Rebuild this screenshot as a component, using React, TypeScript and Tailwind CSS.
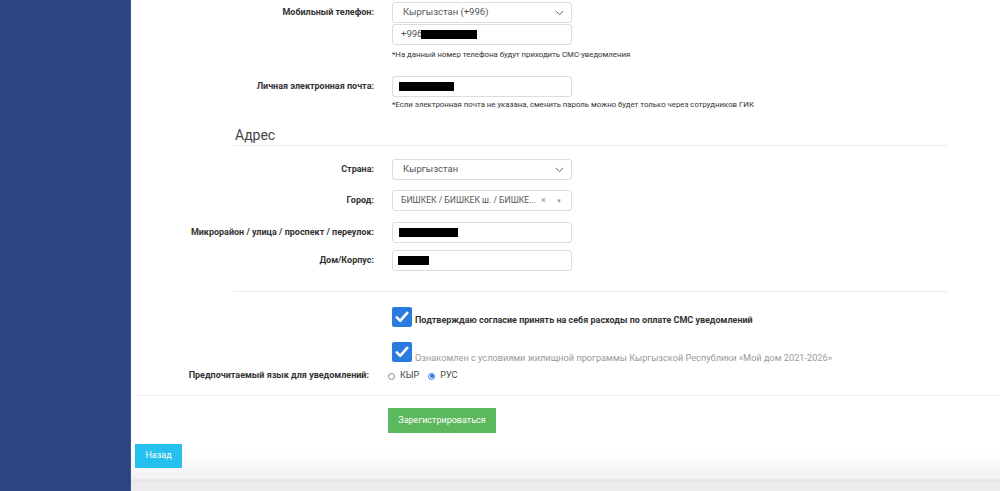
import { ReactNode } from "react";

// Поле ввода / селект
function Field({
  children,
  className = "",
  size = "text-[9.5px]",
}: {
  children?: ReactNode;
  className?: string;
  size?: string;
}) {
  return (
    <div
      className={`flex h-[21px] w-[180px] items-center whitespace-nowrap rounded-[3px] border border-[#dcdcdc] bg-white text-[#555] ${size} ${className}`}
    >
      {children}
    </div>
  );
}

function Chevron() {
  return (
    <svg width="9" height="6" viewBox="0 0 9 6" className="ml-auto mr-[7px]">
      <path d="M0.8 1 L4.5 4.6 L8.2 1" fill="none" stroke="#666" strokeWidth="1" />
    </svg>
  );
}

function Row({ label, children, className = "" }: { label: string; children: ReactNode; className?: string }) {
  return (
    <div className={`flex items-start ${className}`}>
      <div className="flex h-[21px] w-[243px] items-center justify-end text-[9px] font-bold text-[#333]">{label}</div>
      <div className="ml-[18px]">{children}</div>
    </div>
  );
}

function Redacted({ w, ml = 0 }: { w: number; ml?: number }) {
  return <span className="inline-block h-[9px] bg-black" style={{ width: w, marginLeft: ml }} />;
}

function CheckBox() {
  return (
    <div className="flex h-[20px] w-[20px] shrink-0 items-center justify-center rounded-[2px] bg-[#2a7be0]">
      <svg width="14" height="12" viewBox="0 0 14 12">
        <path d="M1.8 6.4 L5.2 9.8 L12.2 1.8" fill="none" stroke="#fff" strokeWidth="2.6" strokeLinecap="round" strokeLinejoin="round" />
      </svg>
    </div>
  );
}

export default function App() {
  return (
    <div className="flex h-[491px] w-[1000px] overflow-hidden font-['Roboto','Liberation_Sans',sans-serif]">
      <div className="h-full w-[131px] shrink-0 border-r border-[#3b5590] bg-[#2b4580]" />

      <div className="flex h-full flex-1 flex-col bg-[linear-gradient(to_bottom,#ffffff_452px,#f1f1f1_479px,#e2e2e2_480px,#ececec_482px)] pt-[2px]">
        {/* Телефон */}
        <Row label="Мобильный телефон:">
          <Field className="pl-[10px]">
            Кыргызстан (+996)
            <Chevron />
          </Field>
          <Field className="mt-[1px] pl-[8px]">
            +996
            <Redacted w={56} ml={-1} />
          </Field>
          <div className="mt-[5px] whitespace-nowrap text-[7.8px] leading-[10px] text-[#333]">
            *На данный номер телефона будут приходить СМС-уведомления
          </div>
        </Row>

        <Row label="Личная электронная почта:" className="mt-[16px]">
          <Field className="pl-[6px]">
            <Redacted w={55} />
          </Field>
          <div className="mt-[3px] whitespace-nowrap text-[7.8px] leading-[10px] text-[#333]">
            *Если электронная почта не указана, сменить пароль можно будет только через сотрудников ГИК
          </div>
        </Row>

        {/* Адрес */}
        <div className="ml-[102px] mr-[52px] mt-[16px] border-b border-[#ebebeb] pb-[1px]">
          <div className="ml-[2px] text-[14px] leading-[18px] text-[#444]">Адрес</div>
        </div>

        <Row label="Страна:" className="mt-[13px]">
          <Field className="pl-[10px]">
            Кыргызстан
            <Chevron />
          </Field>
        </Row>
        <Row label="Город:" className="mt-[10px]">
          <Field size="text-[8.6px]" className="pl-[8px]">
            <span>БИШКЕК / БИШКЕК ш. / БИШКЕ...</span>
            <span className="ml-[5px] text-[9px] text-[#888]">×</span>
            <span className="ml-auto mr-[9px] text-[6px] text-[#999]">▼</span>
          </Field>
        </Row>
        <Row label="Микрорайон / улица / проспект / переулок:" className="mt-[11px]">
          <Field className="pl-[6px]">
            <Redacted w={59} />
          </Field>
        </Row>
        <Row label="Дом/Корпус:" className="mt-[7px]">
          <Field className="pl-[5px]">
            <Redacted w={31} />
          </Field>
        </Row>

        <div className="ml-[102px] mr-[52px] mt-[20px] border-b border-[#ebebeb]" />

        {/* Согласия */}
        <div className="ml-[261px] mt-[15px] flex items-end gap-[3px]">
          <CheckBox />
          <span className="mb-[2px] whitespace-nowrap text-[9px] font-bold leading-[10px] text-[#333]">
            Подтверждаю согласие принять на себя расходы по оплате СМС уведомлений
          </span>
        </div>
        <div className="ml-[261px] mt-[15px] flex items-end gap-[3px]">
          <CheckBox />
          <span className="mb-[-1px] whitespace-nowrap text-[9.2px] leading-[10px] text-[#999]">
            Ознакомлен с условиями жилищной программы Кыргызской Республики «Мой дом 2021-2026»
          </span>
        </div>

        <div className="mt-[8px] flex h-[12px] items-center">
          <div className="w-[238px] text-right text-[9px] font-bold text-[#333]">Предпочитаемый язык для уведомлений:</div>
          <div className="ml-[19px] flex items-center text-[9px] text-[#444]">
            <span className="h-[7px] w-[7px] rounded-full border border-[#888] bg-white" />
            <span className="ml-[5px]">КЫР</span>
            <span className="ml-[9px] flex h-[7px] w-[7px] items-center justify-center rounded-full border border-[#2a7be0]">
              <span className="h-[4px] w-[4px] rounded-full bg-[#2a7be0]" />
            </span>
            <span className="ml-[5px]">РУС</span>
          </div>
        </div>

        <div className="ml-[4px] mt-[13px] border-b border-[#eeeeee]" />

        <button className="ml-[257px] mt-[12px] flex h-[25px] w-[108px] items-center justify-center bg-[#5cb85c] text-[9px] text-white">
          Зарегистрироваться
        </button>

        <button className="ml-[4px] mt-[11px] flex h-[24px] w-[47px] items-center justify-center bg-[#25c0ee] text-[9px] text-white">
          Назад
        </button>
      </div>
    </div>
  );
}
